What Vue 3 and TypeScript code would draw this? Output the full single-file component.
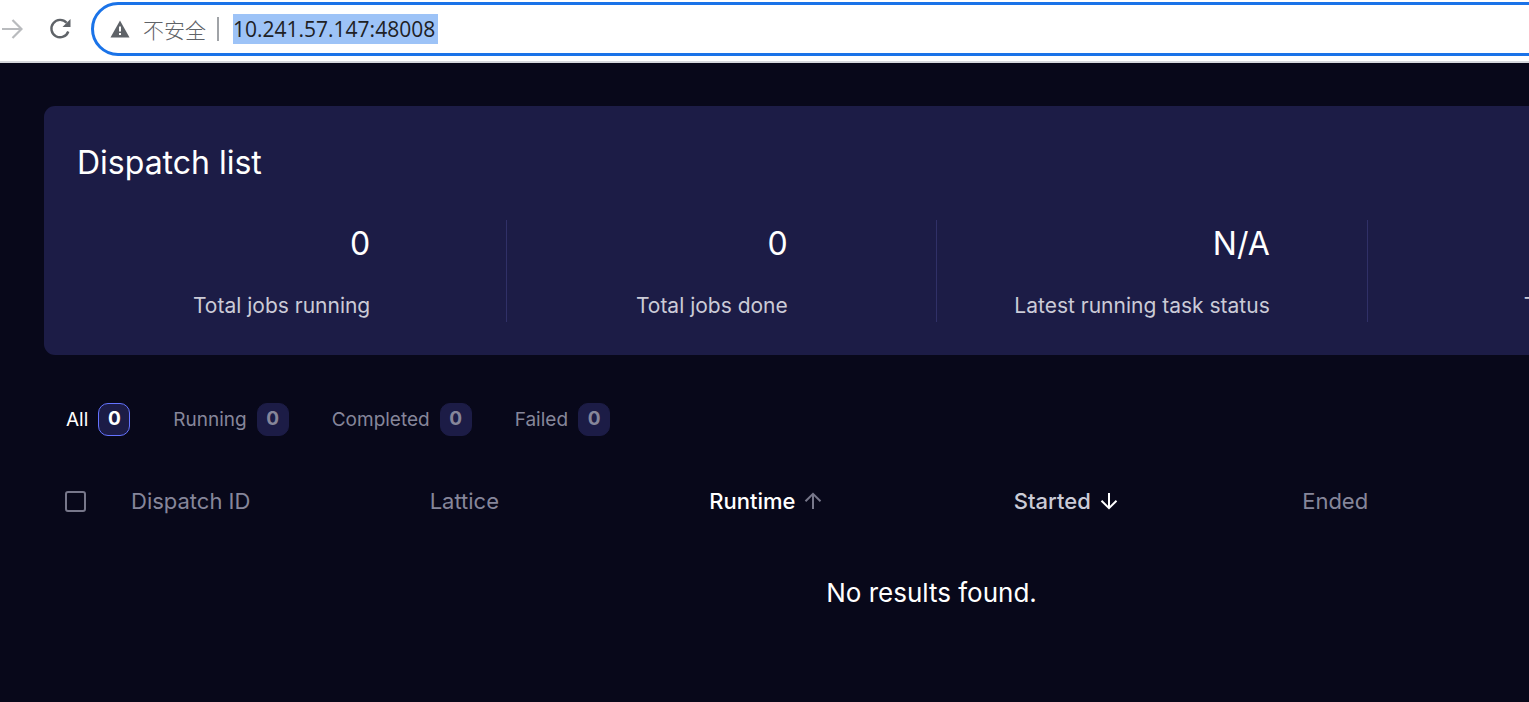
<script setup lang="ts">
import { ref } from 'vue'

interface Stat {
  label: string
  value: string
}

interface Column {
  key: string
  label: string
  tone: 'muted' | 'soft' | 'bright'
  sort?: 'up' | 'down'
}

const address = ref('10.241.57.147:48008')
const allSelected = ref(false)
const activeTab = ref('All')

const stats: Stat[] = [
  { label: 'Total jobs running', value: '0' },
  { label: 'Total jobs done', value: '0' },
  { label: 'Latest running task status', value: 'N/A' },
  { label: 'Total', value: '' },
]

const tabs = [
  { name: 'All', count: 0 },
  { name: 'Running', count: 0 },
  { name: 'Completed', count: 0 },
  { name: 'Failed', count: 0 },
]

const columns: Column[] = [
  { key: 'id', label: 'Dispatch ID', tone: 'muted' },
  { key: 'lattice', label: 'Lattice', tone: 'muted' },
  { key: 'runtime', label: 'Runtime', tone: 'bright', sort: 'up' },
  { key: 'started', label: 'Started', tone: 'soft', sort: 'down' },
  { key: 'ended', label: 'Ended', tone: 'muted' },
]
</script>

<template>
  <div class="window">
    <header class="toolbar">
      <button class="nav forward" type="button" aria-label="Forward">
        <svg width="22" height="22" viewBox="0 0 22 22" fill="none" stroke="#b9bbbe" stroke-width="2.200">
          <path d="M1 11H20M11.500 2L20.500 11L11.500 20" />
        </svg>
      </button>
      <button class="nav reload" type="button" aria-label="Reload">
        <svg width="22" height="22" viewBox="0 0 22 22" fill="none">
          <path d="M17.600 4.800A8.700 8.700 0 1 0 19.300 13.500" stroke="#5f6368" stroke-width="2.400" />
          <path d="M21.500 1V9H13.500Z" fill="#5f6368" />
        </svg>
      </button>
      <div class="omnibox">
        <svg class="warning" width="20" height="18" viewBox="0 0 20 18">
          <path d="M10 0.500L19.500 17.500H0.500Z" fill="#5f6368" />
          <path d="M9 6.500H11V11.500H9ZM9 13H11V15H9Z" fill="#fff" />
        </svg>
        <span class="security">不安全</span>
        <span class="separator"></span>
        <input v-model="address" class="address" type="text" aria-label="Address" spellcheck="false" />
      </div>
    </header>

    <main class="page">
      <section class="card">
        <h1>Dispatch list</h1>
        <div class="stats">
          <div v-for="stat in stats" :key="stat.label" class="stat">
            <div class="stat-text">
              <div class="value">{{ stat.value }}</div>
              <div class="label">{{ stat.label }}</div>
            </div>
          </div>
        </div>
      </section>

      <nav class="tabs">
        <button
          v-for="tab in tabs"
          :key="tab.name"
          type="button"
          class="tab"
          :class="{ active: tab.name === activeTab }"
          @click="activeTab = tab.name"
        >
          {{ tab.name }}<span class="badge">{{ tab.count }}</span>
        </button>
      </nav>

      <table>
        <colgroup>
          <col class="c-check" />
          <col v-for="column in columns" :key="column.key" :class="'c-' + column.key" />
        </colgroup>
        <thead>
          <tr>
            <th><input v-model="allSelected" type="checkbox" aria-label="Select all" /></th>
            <th v-for="column in columns" :key="column.key">
              <button v-if="column.sort" type="button" class="head" :class="column.tone">
                {{ column.label }}
                <svg width="18" height="18" viewBox="0 0 18 18" fill="none" stroke-width="2">
                  <path v-if="column.sort === 'up'" d="M9 17V2M1.500 9.200L9 1.800L16.500 9.200" stroke="#77778a" />
                  <path v-else d="M9 1V16M1.500 8.800L9 16.200L16.500 8.800" stroke="#fff" />
                </svg>
              </button>
              <span v-else class="head" :class="column.tone">{{ column.label }}</span>
            </th>
          </tr>
        </thead>
        <tbody>
          <tr>
            <td class="empty" colspan="6">No results found.</td>
          </tr>
        </tbody>
      </table>
    </main>
  </div>
</template>

<style>
body {
  margin: 0;
  background: #08081a;
}
</style>

<style scoped>
.window {
  min-height: 100vh;
  overflow: hidden;
  background: #08081a;
  color: #fff;
  font-family: Inter, "Liberation Sans", sans-serif;
}

button {
  border: 0;
  padding: 0;
  background: none;
  color: inherit;
  font: inherit;
  cursor: pointer;
}

.toolbar {
  display: flex;
  align-items: center;
  height: 57px;
  padding: 0 0 4px;
  border-bottom: 2px solid #d6d8dc;
  background: #fff;
}

.nav {
  display: flex;
  flex: none;
}

.forward {
  margin-left: 1px;
}

.reload {
  margin: 0 20px 0 26px;
}

.omnibox {
  display: flex;
  flex: 1;
  align-items: center;
  height: 48px;
  margin-right: -40px;
  border: 3px solid #1a73e8;
  border-radius: 27px;
  padding-left: 16px;
}

.security {
  margin-left: 13px;
  color: #5f6368;
  font: 300 21px/30px "Noto Sans CJK SC", sans-serif;
}

.separator {
  width: 2px;
  height: 24px;
  margin: 0 14px 0 11px;
  background: #a0a3a7;
}

.address {
  width: 205px;
  height: 30px;
  border: 0;
  padding: 0;
  outline: 0;
  background: #9dc3f7;
  color: #202124;
  font: 21px/30px "Open Sans", sans-serif;
}

.page {
  padding: 43px 0 0 44px;
}

.card {
  border-radius: 11px 0 0 11px;
  padding: 33px 0 33px 33px;
  background: #1c1c46;
}

h1 {
  margin: 0;
  font-size: 32px;
  font-weight: 400;
  line-height: 48px;
}

.stats {
  display: grid;
  grid-template-columns: repeat(3, minmax(0, 8fr)) minmax(0, 3fr);
  margin-top: 33px;
}

.stat {
  display: flex;
  justify-content: center;
  box-sizing: border-box;
  height: 102px;
  border-right: 1px solid #303067;
  padding-right: 20px;
  text-align: right;
  white-space: nowrap;
}

.stat:last-child {
  justify-content: flex-start;
  border-right: 0;
  padding: 0 0 0 156px;
}

.value {
  height: 48px;
  font-size: 32px;
  line-height: 48px;
}

.label {
  margin-top: 22px;
  color: #cbcbd7;
  font-size: 21px;
  line-height: 32px;
}

.tabs {
  display: flex;
  gap: 43px;
  margin: 48px 0 0 22px;
}

.tab {
  display: flex;
  align-items: center;
  gap: 10px;
  color: #86869a;
  font-size: 19px;
  line-height: 24px;
}

.badge {
  box-sizing: border-box;
  width: 32px;
  height: 33px;
  border: 1px solid #1c1c46;
  border-radius: 10px;
  background: #1c1c46;
  font-weight: 700;
  line-height: 30px;
  text-align: center;
}

.active {
  color: #fff;
}

.active .badge {
  border-color: #6473ff;
}

table {
  width: calc(100% - 21px);
  margin: 43px 0 0 21px;
  border-collapse: collapse;
  table-layout: fixed;
}

.c-check { width: 66px; }
.c-id { width: 20.4%; }
.c-lattice { width: 19.1%; }
.c-runtime { width: 20.8%; }
.c-started { width: 19.7%; }

th {
  height: 44px;
  padding: 0;
  text-align: left;
  vertical-align: middle;
}

input[type="checkbox"] {
  display: block;
  appearance: none;
  width: 21px;
  height: 21px;
  margin: 0;
  border: 2px solid #77778a;
  border-radius: 3px;
}

.head {
  display: flex;
  align-items: center;
  gap: 9px;
  font-size: 22px;
  font-weight: 400;
  line-height: 32px;
}

.muted { color: #86869a; }
.soft { color: #cbcbd7; font-weight: 500; }
.bright { color: #fff; font-weight: 500; }

.empty {
  padding: 50px 0 50px 269px;
  font-size: 26px;
  line-height: 40px;
  text-align: center;
}
</style>
